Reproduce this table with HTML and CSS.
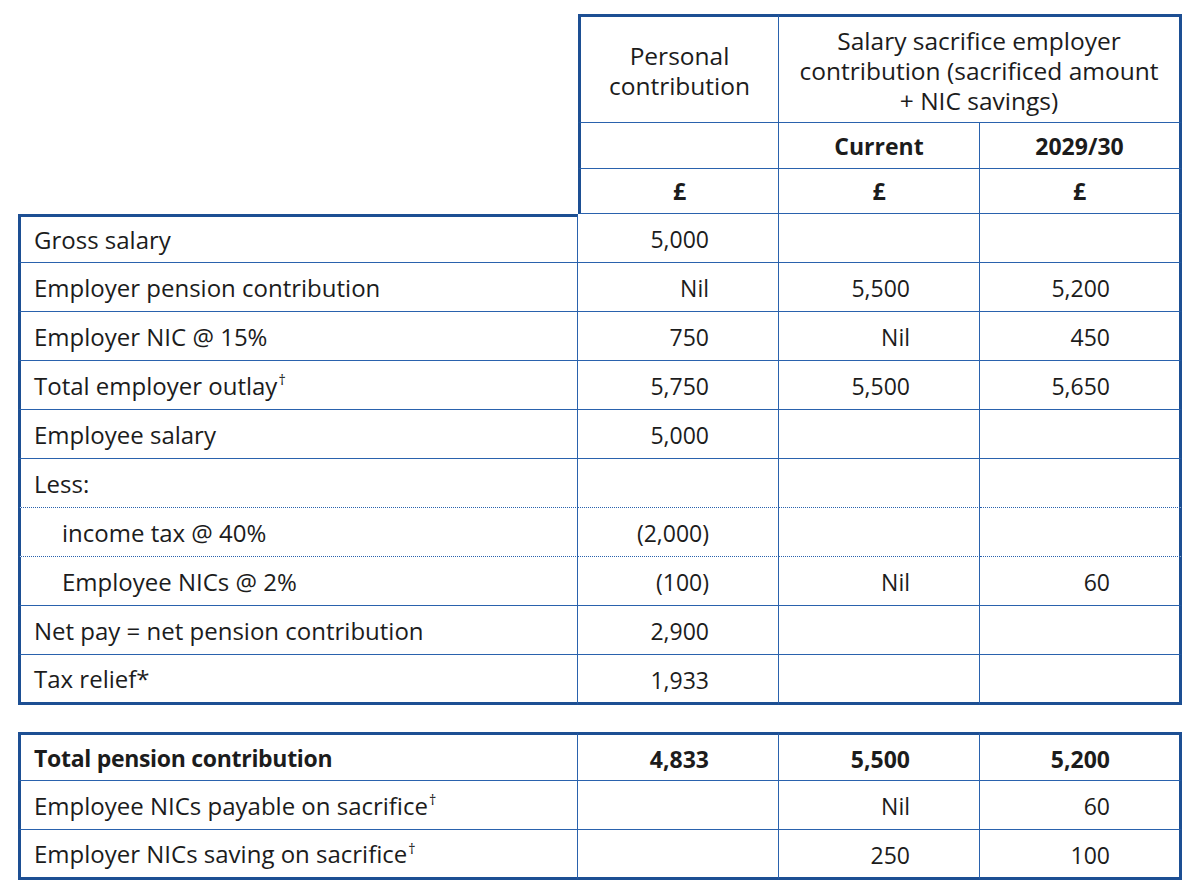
FILE: index.html
```html
<!DOCTYPE html>
<html lang="en">
<head>
<meta charset="utf-8">
<title>Personal contribution vs salary sacrifice</title>
<link rel="stylesheet" href="styles.css">
</head>
<body>
<main class="page">
  <table class="grid">
    <colgroup>
      <col class="c-label"><col class="c-num"><col class="c-num"><col class="c-last">
    </colgroup>
    <thead>
      <tr class="h1">
        <td class="blank" rowspan="3"></td>
        <th class="hd first top">Personal<br>contribution</th>
        <th class="hd top last" colspan="2">Salary sacrifice employer<br>contribution (sacrificed amount<br>+ NIC savings)</th>
      </tr>
      <tr class="h2">
        <th class="hd first"></th>
        <th class="hd strong">Current</th>
        <th class="hd strong last">2029/30</th>
      </tr>
      <tr class="h3">
        <th class="hd first strong">£</th>
        <th class="hd strong">£</th>
        <th class="hd strong last">£</th>
      </tr>
    </thead>
    <tbody>
      <tr class="row firstrow"><td class="lbl">Gross salary</td><td class="num">5,000</td><td class="num"></td><td class="num last"></td></tr>
      <tr class="row"><td class="lbl">Employer pension contribution</td><td class="num">Nil</td><td class="num">5,500</td><td class="num last">5,200</td></tr>
      <tr class="row"><td class="lbl">Employer NIC @ 15%</td><td class="num">750</td><td class="num">Nil</td><td class="num last">450</td></tr>
      <tr class="row"><td class="lbl">Total employer outlay<sup class="dag">†</sup></td><td class="num">5,750</td><td class="num">5,500</td><td class="num last">5,650</td></tr>
      <tr class="row"><td class="lbl">Employee salary</td><td class="num">5,000</td><td class="num"></td><td class="num last"></td></tr>
      <tr class="row dotted"><td class="lbl">Less:</td><td class="num"></td><td class="num"></td><td class="num last"></td></tr>
      <tr class="row dotted"><td class="lbl indent">income tax @ 40%</td><td class="num">(2,000)</td><td class="num"></td><td class="num last"></td></tr>
      <tr class="row"><td class="lbl indent">Employee NICs @ 2%</td><td class="num">(100)</td><td class="num">Nil</td><td class="num last">60</td></tr>
      <tr class="row"><td class="lbl">Net pay = net pension contribution</td><td class="num">2,900</td><td class="num"></td><td class="num last"></td></tr>
      <tr class="row lastrow"><td class="lbl">Tax relief*</td><td class="num">1,933</td><td class="num"></td><td class="num last"></td></tr>
    </tbody>
  </table>

  <table class="grid totals">
    <colgroup>
      <col class="c-label"><col class="c-num"><col class="c-num"><col class="c-last">
    </colgroup>
    <tbody>
      <tr class="row firstrow total"><td class="lbl">Total pension contribution</td><td class="num">4,833</td><td class="num">5,500</td><td class="num last">5,200</td></tr>
      <tr class="row"><td class="lbl">Employee NICs payable on sacrifice<sup class="dag">†</sup></td><td class="num"></td><td class="num">Nil</td><td class="num last">60</td></tr>
      <tr class="row lastrow"><td class="lbl">Employer NICs saving on sacrifice<sup class="dag">†</sup></td><td class="num"></td><td class="num">250</td><td class="num last">100</td></tr>
    </tbody>
  </table>
</main>
</body>
</html>
```

FILE: styles.css
```css
html, body {
  margin: 0;
  padding: 0;
  background: #ffffff;
}

.page {
  padding: 14px 0 0 18px;
  font-family: "Open Sans", Lato, sans-serif;
  color: #1c1c1c;
  font-size: 24px;
}

.grid {
  border-collapse: separate;
  border-spacing: 0;
  table-layout: fixed;
  width: 1163px;
}

.c-label { width: 560px; }
.c-num { width: 201px; }
.c-last { width: 202px; }

.grid th,
.grid td {
  padding: 0;
  border: 0 solid #2a62ad;
  font-weight: normal;
  vertical-align: middle;
}

/* header block */
.blank { border: none; }

.hd {
  text-align: center;
  font-size: 24.5px;
  line-height: 30px;
  border-right-width: 1px !important;
  border-bottom-width: 1px !important;
}

.hd.first { border-left: 3px solid #1d4f93 !important; }
.hd.top { border-top: 3px solid #1d4f93 !important; }
.hd.last { border-right: 3px solid #1d4f93 !important; }
.hd.strong { font-weight: bold; font-size: 23px; }

.h1 { height: 109px; }
.h1 .hd { padding-top: 2px; }
.h2 { height: 46px; }
.h3 { height: 45px; }

/* body rows */
.row { height: 49px; }

.row td {
  border-right-width: 1px;
  border-bottom-width: 1px;
}

.lbl {
  border-left: 3px solid #1d4f93 !important;
  padding-left: 13px !important;
  text-align: left;
  white-space: nowrap;
}

.lbl.indent { padding-left: 41px !important; }

.num {
  text-align: right;
  padding-right: 69px !important;
  padding-top: 2px !important;
  font-size: 23px;
}

.num.last { border-right: 3px solid #1d4f93 !important; }

.firstrow .lbl { border-top: 3px solid #1d4f93; }
.totals .firstrow td { border-top: 3px solid #1d4f93; }

.lastrow td { border-bottom: 3px solid #1d4f93 !important; }
.lastrow { height: 50px; }

.row.dotted td { border-bottom-style: dotted; }

.total td { font-weight: 700; }
.total .lbl { font-size: 23px; letter-spacing: -0.3px; }

.totals { margin-top: 27px; }

.dag {
  font-size: 0.6em;
  vertical-align: 0.65em;
  line-height: 0;
  margin-left: 1px;
}
```
